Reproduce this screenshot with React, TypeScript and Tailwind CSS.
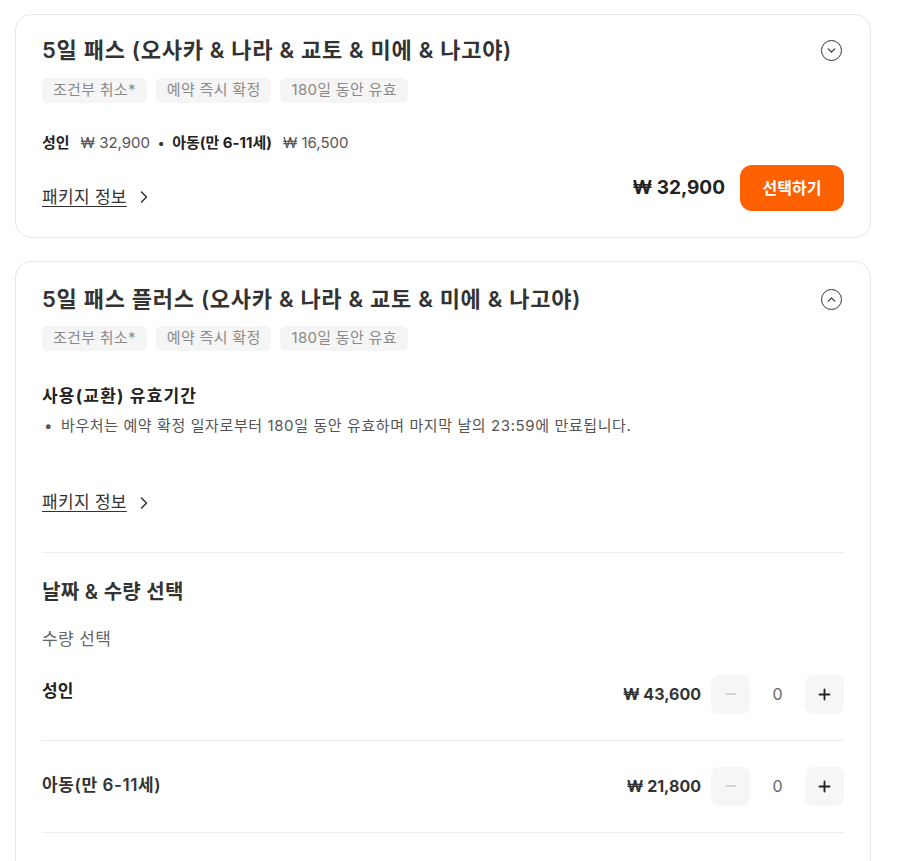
import { ChevronDown, ChevronUp, ChevronRight, Minus, Plus } from 'lucide-react';

const font = { fontFamily: 'Inter, "Noto Sans CJK KR", sans-serif' };

function CircleChevron({ up }: { up?: boolean }) {
  return (
    <span className="mr-[2px] flex h-[21px] w-[21px] items-center justify-center rounded-full border-[1.5px] border-[#333]">
      {up ? <ChevronUp size={13} strokeWidth={2.2} className="text-[#333]" /> : <ChevronDown size={13} strokeWidth={2.2} className="text-[#333]" />}
    </span>
  );
}

function Tags() {
  const tags = ['조건부 취소*', '예약 즉시 확정', '180일 동안 유효'];
  return (
    <div className="flex gap-[9px]">
      {tags.map((t) => (
        <span key={t} className="flex h-[25px] items-center rounded-md bg-[#f5f5f5] px-[11px] text-[15px] tracking-[0.3px] text-[#8a8a8a]">
          {t}
        </span>
      ))}
    </div>
  );
}

function PackageLink() {
  return (
    <a className="flex items-center gap-[7px] text-[17px] tracking-[0.3px] text-[#333]">
      <span className="underline underline-offset-[3px]">패키지 정보</span>
      <ChevronRight size={20} strokeWidth={1.8} className="text-[#333]" />
    </a>
  );
}

function Counter({ price }: { price: string }) {
  return (
    <div className="flex items-center">
      <span className="mr-[10px] text-[16px] font-bold text-[#333]">{price}</span>
      <button className="flex h-[39px] w-[39px] items-center justify-center rounded-lg bg-[#f6f6f6]">
        <Minus size={16} strokeWidth={2} className="text-[#c8c8c8]" />
      </button>
      <span className="w-[55px] text-center text-[16px] text-[#666]">0</span>
      <button className="flex h-[39px] w-[39px] items-center justify-center rounded-lg bg-[#f6f6f6]">
        <Plus size={17} strokeWidth={2.6} className="text-[#222]" />
      </button>
    </div>
  );
}

export default function App() {
  return (
    <div className="min-h-screen bg-white pl-[15px] pr-[29px] pt-[14px] text-[#333]" style={font}>
      <div className="flex flex-col gap-[23px]">
        {/* 5일 패스 */}
        <div className="rounded-2xl border border-[#e8e8e8] px-[26px] pb-[26px] pt-[21px]">
          <div className="flex items-center justify-between">
            <h2 className="text-[22px] font-semibold leading-[29px] tracking-[0.7px] text-[#333]">5일 패스 (오사카 &amp; 나라 &amp; 교토 &amp; 미에 &amp; 나고야)</h2>
            <CircleChevron />
          </div>
          <div className="mt-[13px]">
            <Tags />
          </div>
          <div className="mt-[30px] flex items-center text-[15px] leading-[20px]">
            <span className="font-bold text-[#222]">성인</span>
            <span className="ml-[11px] text-[#555]">₩ 32,900</span>
            <span className="mx-[8px] text-[13px] font-bold text-[#333]">•</span>
            <span className="font-bold text-[#222]">아동(만 6-11세)</span>
            <span className="ml-[11px] text-[#555]">₩ 16,500</span>
          </div>
          <div className="mt-[12px] flex items-end justify-between">
            <div className="mb-[1px]">
              <PackageLink />
            </div>
            <div className="flex items-center gap-[15px]">
              <span className="text-[19px] font-bold text-[#222]">₩ 32,900</span>
              <button className="h-[46px] w-[104px] rounded-xl bg-[#ff6000] text-[16px] font-bold text-white">선택하기</button>
            </div>
          </div>
        </div>

        {/* 5일 패스 플러스 */}
        <div className="rounded-2xl border border-[#e8e8e8] px-[26px] pt-[23px]">
          <div className="flex items-center justify-between">
            <h2 className="text-[22px] font-semibold leading-[29px] tracking-[0.7px] text-[#333]">5일 패스 플러스 (오사카 &amp; 나라 &amp; 교토 &amp; 미에 &amp; 나고야)</h2>
            <CircleChevron up />
          </div>
          <div className="mt-[12px]">
            <Tags />
          </div>
          <h3 className="mt-[33px] text-[17px] font-bold leading-[24px] tracking-[1.2px] text-[#222]">사용(교환) 유효기간</h3>
          <ul className="mt-[8px] text-[15px] leading-[20px] tracking-[0.6px] text-[#555]">
            <li className="flex gap-[8px]">
              <span className="pl-[2px]">•</span>
              <span>바우처는 예약 확정 일자로부터 180일 동안 유효하며 마지막 날의 23:59에 만료됩니다.</span>
            </li>
          </ul>
          <div className="mt-[54px]">
            <PackageLink />
          </div>
          <div className="mt-[36px] border-t border-[#ececec]" />
          <h3 className="mt-[25px] text-[20px] font-semibold leading-[28px] tracking-[0.3px] text-[#333]">날짜 &amp; 수량 선택</h3>
          <p className="mt-[22px] text-[17px] leading-[22px] tracking-[0.4px] text-[#666]">수량 선택</p>
          <div className="mt-[25px] flex items-start justify-between pb-[26px]">
            <span className="mt-[4px] text-[17px] font-bold leading-[24px] text-[#222]">성인</span>
            <Counter price="₩ 43,600" />
          </div>
          <div className="border-t border-[#ececec]" />
          <div className="flex items-center justify-between py-[26px]">
            <span className="text-[17px] font-semibold tracking-[0.6px] text-[#333]">아동(만 6-11세)</span>
            <Counter price="₩ 21,800" />
          </div>
          <div className="border-t border-[#ececec]" />
          <div className="h-[60px]" />
        </div>
      </div>
    </div>
  );
}
